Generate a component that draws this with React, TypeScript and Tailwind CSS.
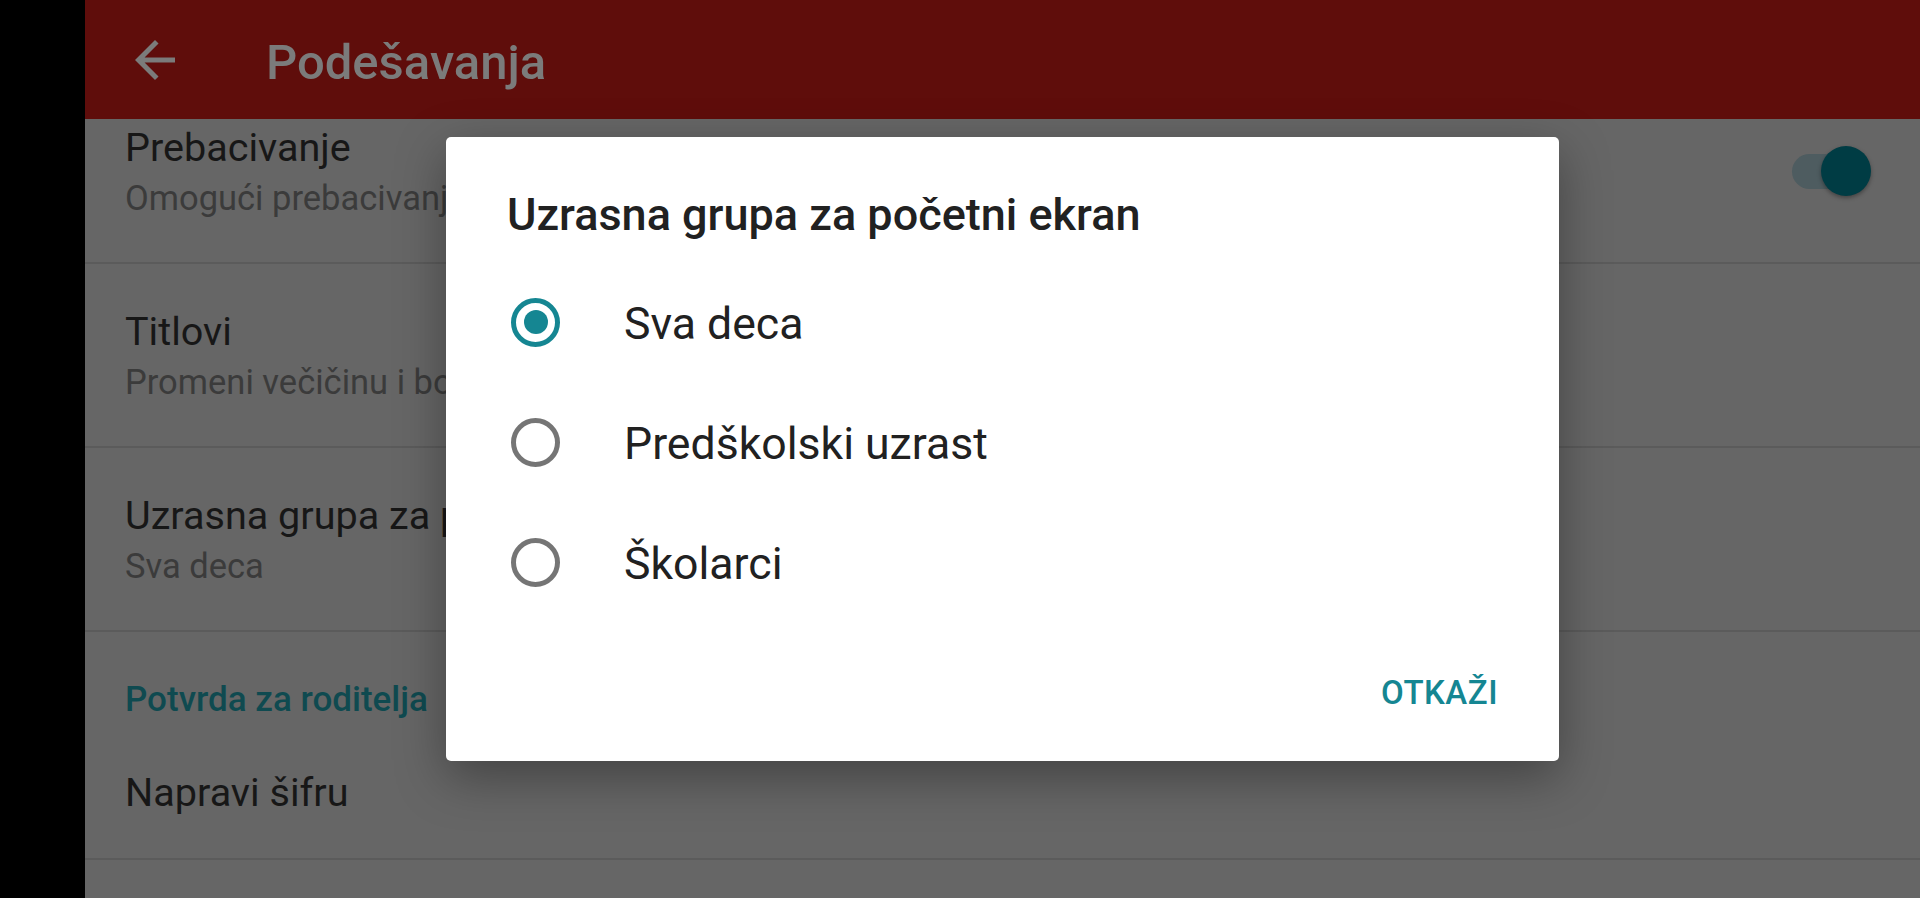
import React from "react";

const rows = [
  { title: "Prebacivanje", summary: "Omogući prebacivanje", toggle: true },
  { title: "Titlovi", summary: "Promeni večičinu i boju titlova" },
  { title: "Uzrasna grupa za početni ekran", summary: "Sva deca" },
];

const options = ["Sva deca", "Predškolski uzrast", "Školarci"];

const Switch = () => (
  <div className="relative h-[50px] w-[79px] self-center">
    <div className="absolute left-0 top-[8px] h-[35px] w-[72px] rounded-full bg-[#4e5c60]" />
    <div className="absolute right-0 top-0 h-[50px] w-[50px] rounded-full bg-[#003c44] shadow-[0_2px_4px_rgba(0,0,0,0.35)]" />
  </div>
);

const Row = ({ title, summary, toggle }: { title: string; summary?: string; toggle?: boolean }) => (
  <div className="flex h-[184px] items-start justify-between border-b-2 border-[#5b5b5b] pl-[40px] pr-[49px]">
    <div className="pt-[45px] whitespace-nowrap">
      <p className="text-[39.6px] leading-[46px] text-[#171717]">{title}</p>
      {summary && <p className="mt-[7px] text-[34.5px] leading-[40px] text-[#3b3b3b]">{summary}</p>}
    </div>
    {toggle && <Switch />}
  </div>
);

const Radio = ({ checked }: { checked: boolean }) => (
  <div
    className={`flex h-[49px] w-[49px] shrink-0 items-center justify-center rounded-full border-[5px] ${
      checked ? "border-[#158692]" : "border-[#757575]"
    }`}
  >
    {checked && <div className="h-[24px] w-[24px] rounded-full bg-[#158692]" />}
  </div>
);

export default function App() {
  return (
    <div className="flex h-[898px] w-[1920px] overflow-hidden font-['Roboto',sans-serif]">
      <div className="w-[85px] shrink-0 bg-black" />

      <div className="relative flex flex-1 flex-col bg-[#666666]">
        {/* Toolbar */}
        <header className="flex h-[119px] shrink-0 items-center bg-[#5f0d0b] pl-[40px]">
          <svg viewBox="0 0 24 24" className="h-[60px] w-[60px] fill-[#7b7b7b]">
            <path d="M20 11H7.83l5.59-5.59L12 4l-8 8 8 8 1.41-1.41L7.83 13H20v-2z" />
          </svg>
          <h1 className="ml-[81px] pt-[5px] text-[49px] font-medium leading-[57px] text-[#7b7b7b]">Podešavanja</h1>
        </header>

        {/* Settings list (scrolled a bit) */}
        <div className="flex-1 overflow-hidden">
          <div className="-mt-[39px]">
            {rows.map((r) => (
              <Row key={r.title} {...r} />
            ))}
            <div className="h-[96px] pl-[40px] pt-[47px]">
              <p className="text-[35px] font-medium leading-[41px] text-[#0f4a50]">Potvrda za roditelja</p>
            </div>
            <div className="h-[132px] border-b-2 border-[#5b5b5b] pl-[40px] pt-[42px]">
              <p className="text-[39.6px] leading-[46px] text-[#171717]">Napravi šifru</p>
            </div>
          </div>
        </div>

        {/* Dialog */}
        <div className="absolute inset-0 flex items-center justify-center">
          <div className="flex h-[624px] w-[1113px] flex-col rounded-[5px] bg-white shadow-[0_16px_50px_rgba(0,0,0,0.35)]">
            <h2 className="pl-[61px] pt-[51px] text-[45px] font-medium leading-[53px] text-[#212121]">
              Uzrasna grupa za početni ekran
            </h2>
            <div className="mt-[21px] flex flex-col">
              {options.map((o, i) => (
                <div key={o} className="flex h-[120px] items-center pl-[65px]">
                  <Radio checked={i === 0} />
                  <span className="ml-[64px] pt-[4px] text-[44.6px] leading-[52px] text-[#212121]">{o}</span>
                </div>
              ))}
            </div>
            <div className="mt-auto flex justify-end pb-[48px] pr-[61px]">
              <button className="text-[33px] font-medium leading-[40px] tracking-[0.5px] text-[#158692]">OTKAŽI</button>
            </div>
          </div>
        </div>
      </div>
    </div>
  );
}
